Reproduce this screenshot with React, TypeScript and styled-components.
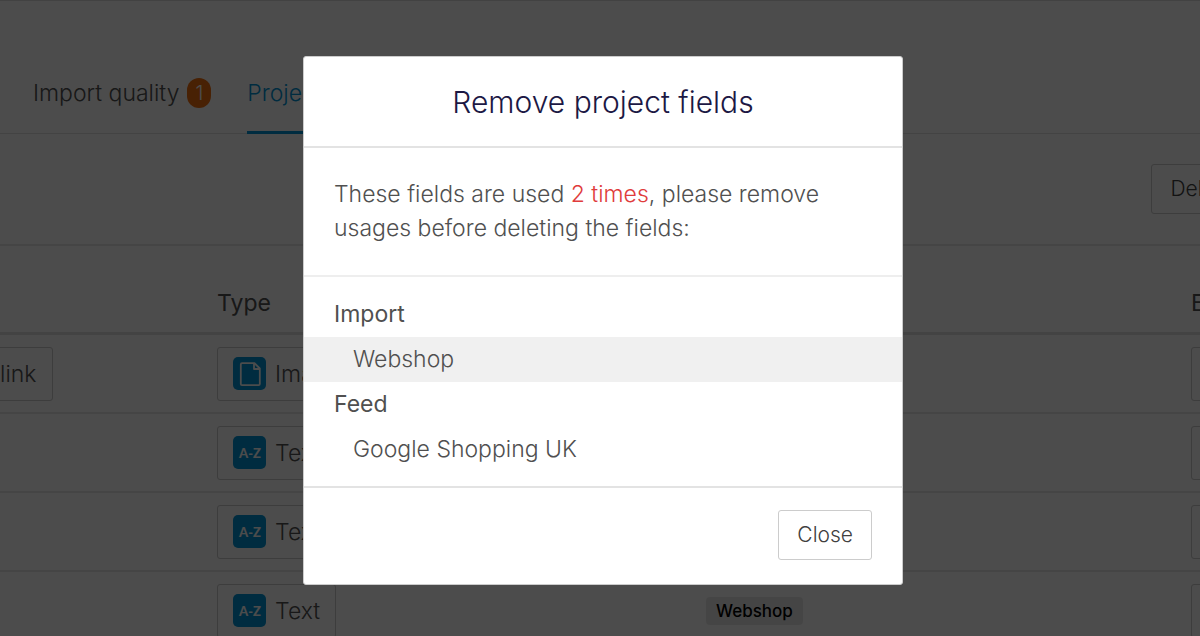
import React from 'react';
import styled, { createGlobalStyle, css } from 'styled-components';

const GlobalStyle = createGlobalStyle`
  *, *::before, *::after { box-sizing: border-box; }
  body {
    margin: 0;
    overflow: hidden;
    background: #fff;
    color: #505050;
    font-family: Inter, 'Liberation Sans', sans-serif;
    font-size: 23px;
    font-weight: 300;
  }
  button { font: inherit; color: inherit; }
`;

const Page = styled.div`
  height: 100vh;
  overflow: hidden;
  border-top: 1px solid #ddd;
`;

const Tabs = styled.nav`
  display: flex;
  gap: 36px;
  height: 133px;
  padding: 53px 33px 0;
  border-bottom: 1px solid #e0e0e0;
`;

const Tab = styled.a<{ $active?: boolean }>`
  display: flex;
  align-items: center;
  gap: 8px;
  height: 80px;
  line-height: 32px;
  white-space: nowrap;
  text-decoration: none;
  color: ${p => (p.$active ? '#0095d5' : '#505050')};
  border-bottom: 3px solid ${p => (p.$active ? '#0095d5' : 'transparent')};
`;

const Count = styled.span`
  padding: 0 8px;
  border-radius: 12px;
  background: #f07010;
  color: #fff;
  font-size: 20px;
  line-height: 30px;
`;

const Toolbar = styled.div`
  display: flex;
  justify-content: flex-end;
  height: 112px;
  padding-top: 30px;
  margin-right: -52px;
  border-bottom: 2px solid #e8e8e8;
`;

const buttonLook = css`
  height: 50px;
  padding: 0 18px;
  border: 1px solid #ccc;
  border-radius: 3px;
  background: #fff;
  color: #404040;
  font-size: 21px;
  font-weight: 350;
  line-height: 46px;
`;

const Button = styled.button`
  ${buttonLook}
`;

const TableArea = styled.div`
  margin: 0 -120px 0 -27px;
`;

const Table = styled.table`
  width: 100%;
  table-layout: fixed;
  border-collapse: separate;
  border-spacing: 0;
`;

const HeadCell = styled.th<{ $width: string }>`
  width: ${p => p.$width};
  padding: 28px 0 0;
  border-bottom: 3px solid #e0e0e0;
  text-align: left;
  vertical-align: top;
  font-weight: 400;
  line-height: 58px;
`;

const Cell = styled.td`
  height: 79px;
  padding: 0;
  border-bottom: 2px solid #e8e8e8;
  vertical-align: middle;
`;

const Chip = styled.div`
  display: inline-flex;
  align-items: center;
  gap: 9px;
  height: 54px;
  min-width: 60px;
  padding: 0 15px;
  border: 1px solid #ccc;
  border-radius: 3px;
  vertical-align: middle;
`;

const TypeIcon = styled.svg`
  width: 33px;
  height: 33px;
  flex: none;
`;

const Tag = styled.span`
  display: inline-block;
  padding: 0 10px;
  border-radius: 4px;
  background: #e8e8e8;
  color: #000;
  font-size: 17px;
  font-weight: 500;
  line-height: 28px;
  vertical-align: middle;
`;

const Overlay = styled.div`
  position: fixed;
  inset: 0;
  display: flex;
  align-items: flex-start;
  justify-content: center;
  padding: 56px 0 0 6px;
  background: rgba(0, 0, 0, 0.7);
`;

const Dialog = styled.section`
  width: 100%;
  max-width: 600px;
  border: 1px solid #ccc;
  border-radius: 3px;
  background: #fff;
`;

const Title = styled.h2`
  margin: 0;
  padding: 25px 32px 24px;
  border-bottom: 2px solid #e3e3e3;
  color: #1c1844;
  font-size: 30px;
  font-weight: 350;
  line-height: 40px;
  text-align: center;
`;

const Message = styled.p`
  margin: 0;
  padding: 29px 30px 30px;
  border-bottom: 2px solid #eee;
  line-height: 34px;
`;

const Alert = styled.span`
  color: #e03c3c;
`;

const Usages = styled.dl`
  margin: 0;
  padding: 15px 0 14px;
  border-bottom: 2px solid #e3e3e3;
  line-height: 45px;
`;

const Group = styled.dt`
  padding: 0 30px;
  font-weight: 400;
`;

const Usage = styled.dd<{ $hovered?: boolean }>`
  margin: 0;
  padding: 0 49px;
  background: ${p => (p.$hovered ? '#f0f0f0' : 'transparent')};
`;

const Footer = styled.footer`
  display: flex;
  justify-content: flex-end;
  padding: 22px 30px 24px;
`;

const FileIcon = () => (
  <TypeIcon viewBox="0 0 33 33" aria-hidden="true">
    <rect width="33" height="33" rx="5" fill="#0095d5" />
    <path d="M9 6.2H21.5L26.8 11.5V27a1.2 1.2 0 0 1-1.2 1.2H9A1.2 1.2 0 0 1 7.8 27V7.4A1.2 1.2 0 0 1 9 6.2ZM21 6.2V12H26.8" fill="none" stroke="#fff" strokeWidth="1.8" strokeLinejoin="round" />
  </TypeIcon>
);

const TextIcon = () => (
  <TypeIcon viewBox="0 0 33 33" aria-hidden="true">
    <rect width="33" height="33" rx="5" fill="#0095d5" />
    <text x="17" y="22" fill="#fff" textAnchor="middle" fontFamily="Lato, sans-serif" fontSize="13" fontWeight="900">A-Z</text>
  </TypeIcon>
);

const rows = [
  { name: '_link', type: 'Image', Icon: FileIcon, usage: '' },
  { name: '', type: 'Text', Icon: TextIcon, usage: '' },
  { name: '', type: 'Text', Icon: TextIcon, usage: '' },
  { name: '', type: 'Text', Icon: TextIcon, usage: 'Webshop' },
];

export default function App() {
  return (
    <>
      <GlobalStyle />
      <Page>
        <Tabs>
          <Tab href="#quality">Import quality <Count>1</Count></Tab>
          <Tab href="#fields" $active>Project fields</Tab>
        </Tabs>
        <Toolbar>
          <Button type="button">Delete</Button>
        </Toolbar>
        <TableArea>
          <Table>
            <thead>
              <tr>
                <HeadCell $width="18.12%" />
                <HeadCell $width="36.3%">Type</HeadCell>
                <HeadCell $width="36.01%" />
                <HeadCell $width="9.57%">Edit</HeadCell>
              </tr>
            </thead>
            <tbody>
              {rows.map(({ name, type, Icon, usage }, i) => (
                <tr key={i}>
                  <Cell>{name && <Chip>{name}</Chip>}</Cell>
                  <Cell><Chip><Icon />{type}</Chip></Cell>
                  <Cell>{usage && <Tag>{usage}</Tag>}</Cell>
                  <Cell><Chip /></Cell>
                </tr>
              ))}
            </tbody>
          </Table>
        </TableArea>
      </Page>
      <Overlay>
        <Dialog role="dialog" aria-modal="true" aria-labelledby="dialog-title">
          <Title id="dialog-title">Remove project fields</Title>
          <Message>
            These fields are used <Alert>2 times</Alert>, please remove usages before deleting the fields:
          </Message>
          <Usages>
            <Group>Import</Group>
            <Usage $hovered>Webshop</Usage>
            <Group>Feed</Group>
            <Usage>Google Shopping UK</Usage>
          </Usages>
          <Footer>
            <Button type="button">Close</Button>
          </Footer>
        </Dialog>
      </Overlay>
    </>
  );
}
